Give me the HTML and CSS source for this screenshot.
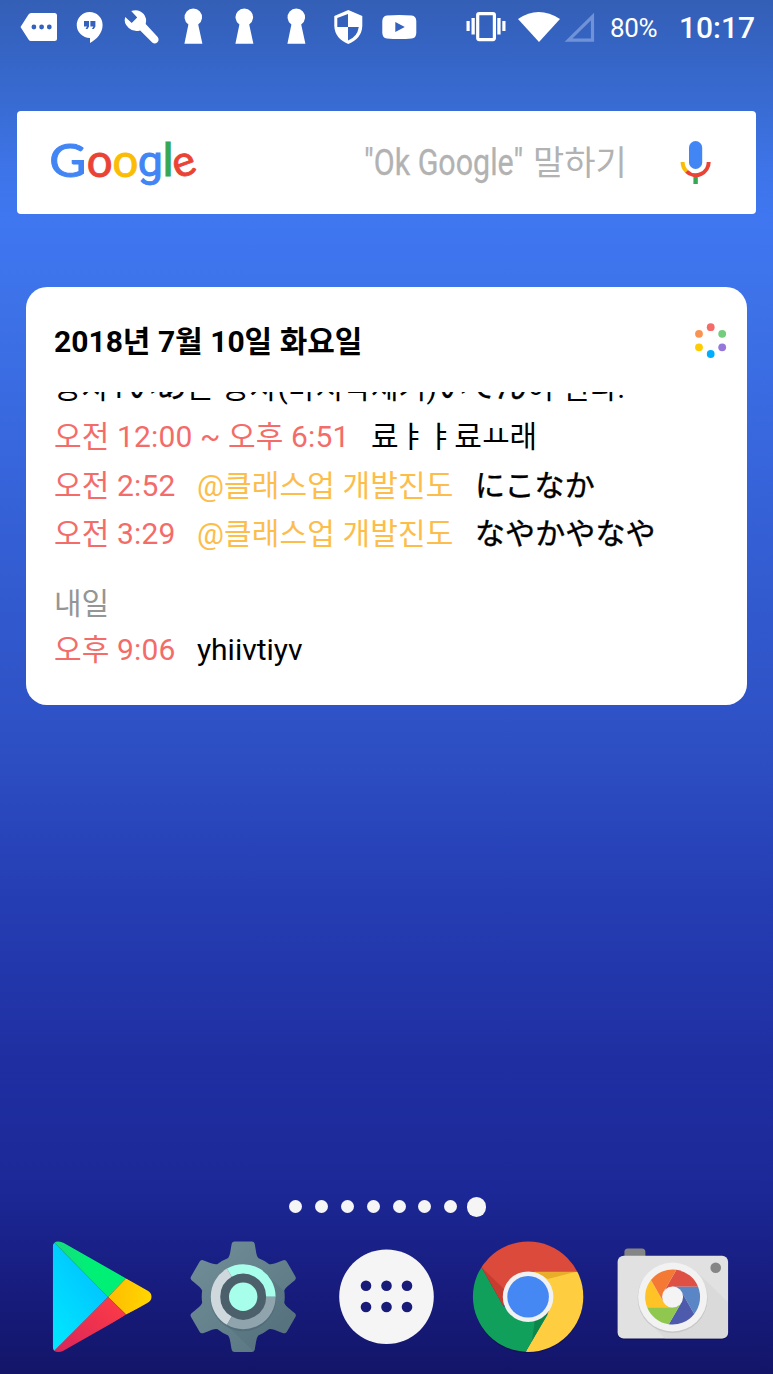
FILE: index.html
```
<!DOCTYPE html>
<html lang="ko">
<head>
<meta charset="utf-8">
<title>홈 화면</title>
<link rel="stylesheet" href="styles.css">
</head>
<body>
<div class="home">
  <header class="status">
    <div class="notifications">
      <svg viewBox="21 9 36 36"><path fill-rule="evenodd" d="M31 13H54.5Q57 13 57 15.500V38.500Q57 41 54.500 41H31Q29.500 41 28.500 39.500L20.500 27L28.500 14.500Q29.500 13 31 13ZM31.500 27a2.400 2.400 0 1 0 4.800 0a2.400 2.400 0 1 0-4.800 0ZM39.200 27a2.400 2.400 0 1 0 4.800 0a2.400 2.400 0 1 0-4.800 0ZM46.900 27a2.400 2.400 0 1 0 4.800 0a2.400 2.400 0 1 0-4.800 0Z"/></svg>
      <svg viewBox="73 9 36 36"><path fill-rule="evenodd" d="M89.500 12A13 13 0 0 1 102.600 25C102.600 33 96.500 39.500 90 43V38A13 13 0 1 1 89.500 12ZM84 21V26.500H87L85.500 29H87.500L89 26.500V21ZM90.400 21V26.500H93.400L91.900 29H93.900L95.400 26.500V21Z"/></svg>
      <svg viewBox="124.300 9 36 36"><path d="M131.500 11Q139 8.500 144 14Q147.500 18.500 146 24L158 37Q160 40 157.500 42.500Q155 44.500 152.500 42.500L140.500 30.500Q134 32.500 129 28Q123.500 23 125.500 17L132 23L137.500 17.500Z"/></svg>
      <svg viewBox="175.800 9 36 36"><path d="M184.200 43.800L188.200 24.500A8.800 8.800 0 1 1 198 24.500L202.200 43.800Z"/></svg>
      <svg viewBox="175.800 9 36 36"><path d="M184.200 43.800L188.200 24.500A8.800 8.800 0 1 1 198 24.500L202.200 43.800Z"/></svg>
      <svg viewBox="175.800 9 36 36"><path d="M184.200 43.800L188.200 24.500A8.800 8.800 0 1 1 198 24.500L202.200 43.800Z"/></svg>
      <svg viewBox="330.700 9 36 36"><path fill-rule="evenodd" d="M348 10L362 16V26Q361.500 38.500 348 44Q334.500 38.500 334 26V16ZM347.700 14L337 18V27H347.700ZM347.700 27V40.500Q357 37 358.500 27Z"/></svg>
      <svg viewBox="382.200 9 36 36"><path fill-rule="evenodd" d="M387 15.500Q399.500 14.500 412 15.500Q416.300 16 416.500 21V33Q416.300 38 412 38.500Q399.500 39.500 387 38.500Q382.800 38 382.500 33V21Q382.800 16 387 15.500ZM395.500 22V32L405 27Z"/></svg>
    </div>
    <svg class="vibrate" viewBox="466 9 41 36"><rect x="477.700" y="13.600" width="16.700" height="26" rx="1.500" fill="none" stroke="#fff" stroke-width="3.200"/><path d="M466.500 21h3.200v10h-3.200zM471.500 18h3.300v16.500h-3.300zM497.300 18h3.300v16.500h-3.300zM502.300 21h3.200v10h-3.200z"/></svg>
    <svg class="wifi" viewBox="518 9 42 36"><path d="M518 19Q538.500 5 560 19L539 42Z"/></svg>
    <svg class="signal" viewBox="563 9 32 36"><path d="M592.500 16.500V40.200H568.500Z" fill="none" stroke="#7092d9" stroke-width="3.200"/></svg>
    <span class="battery">80%</span>
    <time class="clock">10:17</time>
  </header>

  <section class="search">
    <svg class="google" viewBox="50 130 150 60"><text class="g-blue" transform="translate(49.300 175.800) scale(1.080 1)">G</text><text class="g-red" transform="translate(86.700 175.800) scale(.97)">o</text><text class="g-yellow" transform="translate(112.500 175.800) scale(.97)">o</text><text class="g-blue single" transform="translate(137.700 175.300) scale(1.040 1)">g</text><text class="g-green" x="162.500" y="175.300">l</text><text class="g-red" text-anchor="middle" transform="translate(184.500 164.500) rotate(-20) scale(.92)" y="11.300">e</text></svg>
    <span class="hint"><span class="hint-latin">"Ok Google"</span><span>말하기</span></span>
    <svg class="mic" viewBox="678 138 36 50"><rect x="689" y="141" width="13.200" height="28" rx="6.600" fill="#4285f4"/><path d="M693.400 176h4.400v8h-4.400z" fill="#34a853"/><g fill="none" stroke-width="4"><path d="M682.600 162A13 13 0 0 0 686.500 171.300" stroke="#fbbc05"/><path d="M686.500 171.300A13 13 0 0 0 708.700 162" stroke="#ea4335"/></g></svg>
  </section>

  <main class="card">
    <div class="card-head">
      <h1>2018년 7월 10일 화요일</h1>
      <svg class="ring" viewBox="694 322 34 38"><circle cx="710.700" cy="327.200" r="3.900" fill="#f36c69"/><circle cx="722.200" cy="333.800" r="3.900" fill="#72cd7c"/><circle cx="722.200" cy="347.300" r="3.900" fill="#9678db"/><circle cx="710.700" cy="354" r="3.900" fill="#00aeff"/><circle cx="699" cy="347.300" r="3.900" fill="#ffcc00"/><circle cx="699" cy="333.800" r="3.900" fill="#fa9254"/></svg>
    </div>
    <div class="agenda">
      <p class="row first"><span>공사1<span class="ja">いあ</span>는 공사(마지막제거)<span class="ja">いてん</span>이 된다.</span></p>
      <p class="row"><span class="when">오전 12:00 ~ 오후 6:51</span><span>료ㅑㅑ료ㅛ래</span></p>
      <p class="row"><span class="when">오전 2:52</span><span class="tag">@클래스업 개발진도</span><span class="ja">にこなか</span></p>
      <p class="row"><span class="when">오전 3:29</span><span class="tag">@클래스업 개발진도</span><span class="ja">なやかやなや</span></p>
      <h2>내일</h2>
      <p class="row last"><span class="when">오후 9:06</span><span class="latin">yhiivtiyv</span></p>
    </div>
  </main>

  <div class="bottom">
    <div class="pages"><i></i><i></i><i></i><i></i><i></i><i></i><i></i><i class="current"></i></div>
    <nav class="dock">
      <svg viewBox="46.200 1241 112 112">
        <defs>
          <clipPath id="tri"><path d="M53 1247Q53 1241.500 58.500 1241.500Q61.500 1241.500 64 1243L147.500 1290.500Q151.800 1293 151.800 1296.700Q151.800 1300.500 147.500 1303L64 1350.500Q61 1352 58.500 1352Q53 1352 53 1346.500Z"/></clipPath>
          <linearGradient id="pb" x1="1" y1="0" x2="0.300" y2="1"><stop offset="0" stop-color="#00b8ff"/><stop offset="1" stop-color="#00e5ff"/></linearGradient>
          <linearGradient id="pr" x1="1" y1="0" x2="0" y2="1"><stop offset="0" stop-color="#ff3d44"/><stop offset="1" stop-color="#d8245c"/></linearGradient>
          <linearGradient id="pg"><stop offset="0" stop-color="#1ad980"/><stop offset=".5" stop-color="#00f076"/></linearGradient>
          <linearGradient id="py"><stop offset="0" stop-color="#ffbc00"/><stop offset="1" stop-color="#ffd900"/></linearGradient>
        </defs>
        <g clip-path="url(#tri)"><path d="M52 1240L108.300 1297L52 1354Z" fill="url(#pb)"/><path d="M52 1240H65L126.300 1278.300L108.300 1297L54 1242Z" fill="url(#pg)"/><path d="M126.300 1278.300L155 1293V1300L126.300 1314.500L108.300 1297Z" fill="url(#py)"/><path d="M108.300 1297L126.300 1314.500L65 1354H52V1353Z" fill="url(#pr)"/></g>
      </svg>
      <svg viewBox="-55.200 -55.700 112 112">
        <defs>
          <linearGradient id="gear" gradientUnits="userSpaceOnUse" x1="-45" y1="-45" x2="45" y2="45"><stop offset="0" stop-color="#708d97"/><stop offset="1" stop-color="#587681"/></linearGradient>
          <clipPath id="gearshape"><path id="bar" d="M-15 -39C-13 -41-12.500 -48-11.500 -53Q-11 -55.300-8.500 -55.300H8.500Q11 -55.300 11.500 -53C12.500 -48 13 -41 15 -39V39C13 41 12.500 48 11.500 53Q11 55.300 8.500 55.300H-8.500Q-11 55.300-11.500 53C-12.500 48-13 41-15 39Z"/><use href="#bar" transform="rotate(60)"/><use href="#bar" transform="rotate(120)"/><circle r="41.500"/></clipPath>
        </defs>
        <g clip-path="url(#gearshape)"><path d="M-56 -56H56V56H-56Z" fill="url(#gear)"/><path d="M22 -24L58 12V58H14L-18 27Z" fill="#45616c" opacity=".2"/></g>
        <circle cy="1.500" r="33" fill="#435d68" opacity=".35"/>
        <circle r="27" fill="#4b606a"/>
        <g fill="none" stroke-width="9.500"><path d="M27.700 0A27.700 27.700 0 0 0-13.850 -24" stroke="#a7ffeb"/><path d="M-13.850 -24A27.700 27.700 0 0 0-13.850 24" stroke="#cfd8dc"/><path d="M-13.850 24A27.700 27.700 0 0 0 27.700 0" stroke="#90a4ae"/></g>
        <circle r="14.200" fill="#a7ffeb"/>
      </svg>
      <svg viewBox="-55.500 -55.700 112 112"><circle r="47.300" fill="#f5f5f5"/><g fill="#181c78"><circle cx="-20.500" cy="-11" r="5.300"/><circle cy="-11" r="5.300"/><circle cx="20.500" cy="-11" r="5.300"/><circle cx="-20.500" cy="10.300" r="5.300"/><circle cy="10.300" r="5.300"/><circle cx="20.500" cy="10.300" r="5.300"/></g></svg>
      <svg viewBox="473.100 1241 112 112">
        <defs><clipPath id="disc"><circle cx="528.200" cy="1296.700" r="55.200"/></clipPath></defs>
        <circle cx="528.200" cy="1298" r="55" fill="#080c45" opacity=".5"/>
        <g clip-path="url(#disc)"><path d="M528 1271.500H590V1360H521L549 1311Z" fill="#ffcd40"/><path d="M481.700 1267.300L503.500 1306L528 1322L548 1314L525.700 1352V1360H465V1240Z" fill="#11a05b"/><path d="M470 1240H590V1271.500H528L503.500 1306L481.700 1267.300Z" fill="#db4a3b"/><path d="M481.700 1267.300L505 1290L503.500 1306Z" fill="#bd3429" opacity=".65"/><path d="M534 1271.500H577L548 1279Z" fill="#dc9d20" opacity=".65"/><path d="M548 1314L532 1341L535 1320Z" fill="#08733e" opacity=".55"/></g>
        <circle cx="528.200" cy="1296.700" r="25.300" fill="#f1f1f1"/><circle cx="528.200" cy="1296.700" r="20.800" fill="#4587f3"/>
      </svg>
      <svg viewBox="615.100 1241 112 112">
        <path d="M624.500 1258V1252Q624.500 1248.500 628 1248.500H642Q645.500 1248.500 645.500 1252V1258Z" fill="#858585"/>
        <rect x="617.700" y="1257" width="110.500" height="82.700" rx="6" fill="#090b42" opacity=".6"/>
        <rect x="617.700" y="1255.700" width="110.500" height="82.700" rx="6" fill="#e1e1e1"/>
        <path d="M697 1272L728 1302V1333Q728 1338.400 722 1338.400H665L648 1321Z" fill="#d4d4d4" opacity=".5"/>
        <circle cx="715.800" cy="1267.800" r="5.300" fill="#858585"/>
        <circle cx="672.700" cy="1298" r="35" fill="#bbb" opacity=".6"/><circle cx="672.700" cy="1297" r="34.500" fill="#f2f2f2"/>
        <g transform="translate(672.700 1297)">
          <path d="M0 -10.300H25.500A27.500 27.500 0 0 0 3.800 -27.200L-8.900 -5.150Z" fill="#df5044"/>
          <path d="M0 -10.300H25.500A27.500 27.500 0 0 0 3.800 -27.200L-8.900 -5.150Z" transform="rotate(60)" fill="#5a86c6"/>
          <path d="M0 -10.300H25.500A27.500 27.500 0 0 0 3.800 -27.200L-8.900 -5.150Z" transform="rotate(120)" fill="#4e5bac"/>
          <path d="M0 -10.300H25.500A27.500 27.500 0 0 0 3.800 -27.200L-8.900 -5.150Z" transform="rotate(180)" fill="#8fc74f"/>
          <path d="M0 -10.300H25.500A27.500 27.500 0 0 0 3.800 -27.200L-8.900 -5.150Z" transform="rotate(240)" fill="#ffc328"/>
          <path d="M0 -10.300H25.500A27.500 27.500 0 0 0 3.800 -27.200L-8.900 -5.150Z" transform="rotate(300)" fill="#f37934"/>
          <circle r="10.500" fill="#f4f4f4"/>
        </g>
      </svg>
    </nav>
  </div>
</div>
</body>
</html>
```
FILE: styles.css
```
* { box-sizing: border-box; margin: 0; padding: 0; }
body { font-family: Roboto, "Noto Sans CJK KR", sans-serif; }
svg { display: block; flex: none; overflow: visible; }
.home {
  width: 773px; height: 1374px; overflow: hidden;
  display: flex; flex-direction: column; align-items: center;
  background: linear-gradient(#345fb6 0, #3564c4 50px, #396cd4 110px, #3e74e9 170px, #3f77f1 220px, #3d72e9 300px, #3866dc 450px, #3159cd 620px, #2e50c5 740px, #253db3 900px, #1f2fa2 1060px, #1c2896 1190px, #181e82 1270px, #131568 1374px);
}
.status { align-self: stretch; height: 54px; padding-left: 21px; display: flex; align-items: center; color: #fff; fill: #fff; }
.notifications { display: flex; gap: 15.600px; }
.notifications svg { width: 36px; height: 36px; }
.vibrate { width: 41px; height: 36px; margin-left: 47.800px; }
.wifi { width: 42px; height: 36px; margin-left: 11px; }
.signal { width: 32px; height: 36px; margin-left: 3px; }
.battery { font-size: 26px; width: 70px; padding-left: 15px; line-height: 36px; padding-top: 2px; white-space: nowrap; letter-spacing: -.3px; }
.clock { font-size: 30px; font-weight: 500; line-height: 36px; margin-left: 14px; padding-top: 2px; white-space: nowrap; }
.search { width: 739px; height: 103px; margin-top: 57px; padding: 0 42px 0 33px; border-radius: 4px; background: #fff; display: flex; align-items: center; }
.google { width: 150px; height: 60px; margin-top: -4px; font-family: Lato, sans-serif; font-size: 47px; }
.google text { stroke-width: 1px; }
.google .single { font-family: Roboto, sans-serif; font-size: 43px; }
.g-blue { fill: #4285f4; stroke: #4285f4; }
.g-red { fill: #ea4335; stroke: #ea4335; }
.g-yellow { fill: #fbbc05; stroke: #fbbc05; }
.g-green { fill: #34a853; stroke: #34a853; }
.hint { flex: 1; padding-left: 164px; display: flex; font-size: 34px; line-height: 50px; color: #b2b2b2; white-space: nowrap; }
.hint-latin { width: 169px; font-size: 36px; transform: scaleX(.845); transform-origin: left; -webkit-text-stroke: .3px #b2b2b2; }
.mic { width: 36px; height: 50px; }
.card { width: 721px; height: 418px; margin: 73px 0 0 0; padding: 0 19px 0 28px; border-radius: 21px; background: #fff; color: #000; }
.card-head { height: 105px; padding-top: 2px; display: flex; align-items: center; justify-content: space-between; }
h1 { font-size: 30px; font-weight: 700; line-height: 40px; padding-top: 2px; white-space: nowrap; }
.ring { width: 34px; height: 38px; }
.agenda { height: 284px; overflow: hidden; display: flex; flex-direction: column; justify-content: flex-end; font-size: 30px; }
.row { height: 48.600px; line-height: 48.600px; flex: none; display: flex; gap: 21.500px; white-space: nowrap; letter-spacing: .13px; }
.first { margin-bottom: 1px; }
.when { color: #f36c69; }
.tag { color: #fdbd4b; }
.ja { font-family: "Noto Sans CJK JP", sans-serif; font-weight: 400; -webkit-text-stroke: .4px #000; }
.row > .ja { margin-top: -3px; }
.first .ja { line-height: 1; vertical-align: 1px; }
h2 { flex: none; margin-top: 21.400px; height: 46px; font-size: 30px; line-height: 48.600px; font-weight: 400; color: #959595; }
.last { padding-bottom: 1px; height: 49.600px; }
.latin { letter-spacing: 0; }
.bottom { margin-top: 492px; display: flex; flex-direction: column; align-items: center; }
.pages { height: 19.500px; margin-left: 2.600px; display: flex; align-items: center; gap: 12.800px; }
.pages i { width: 13px; height: 13px; border-radius: 50%; background: #f5f5f5; }
.pages .current { width: 19.500px; height: 19.500px; margin-left: -3.250px; }
.dock { margin-top: 24.500px; display: flex; gap: 30.400px; }
.dock svg { width: 112px; height: 112px; }
```
